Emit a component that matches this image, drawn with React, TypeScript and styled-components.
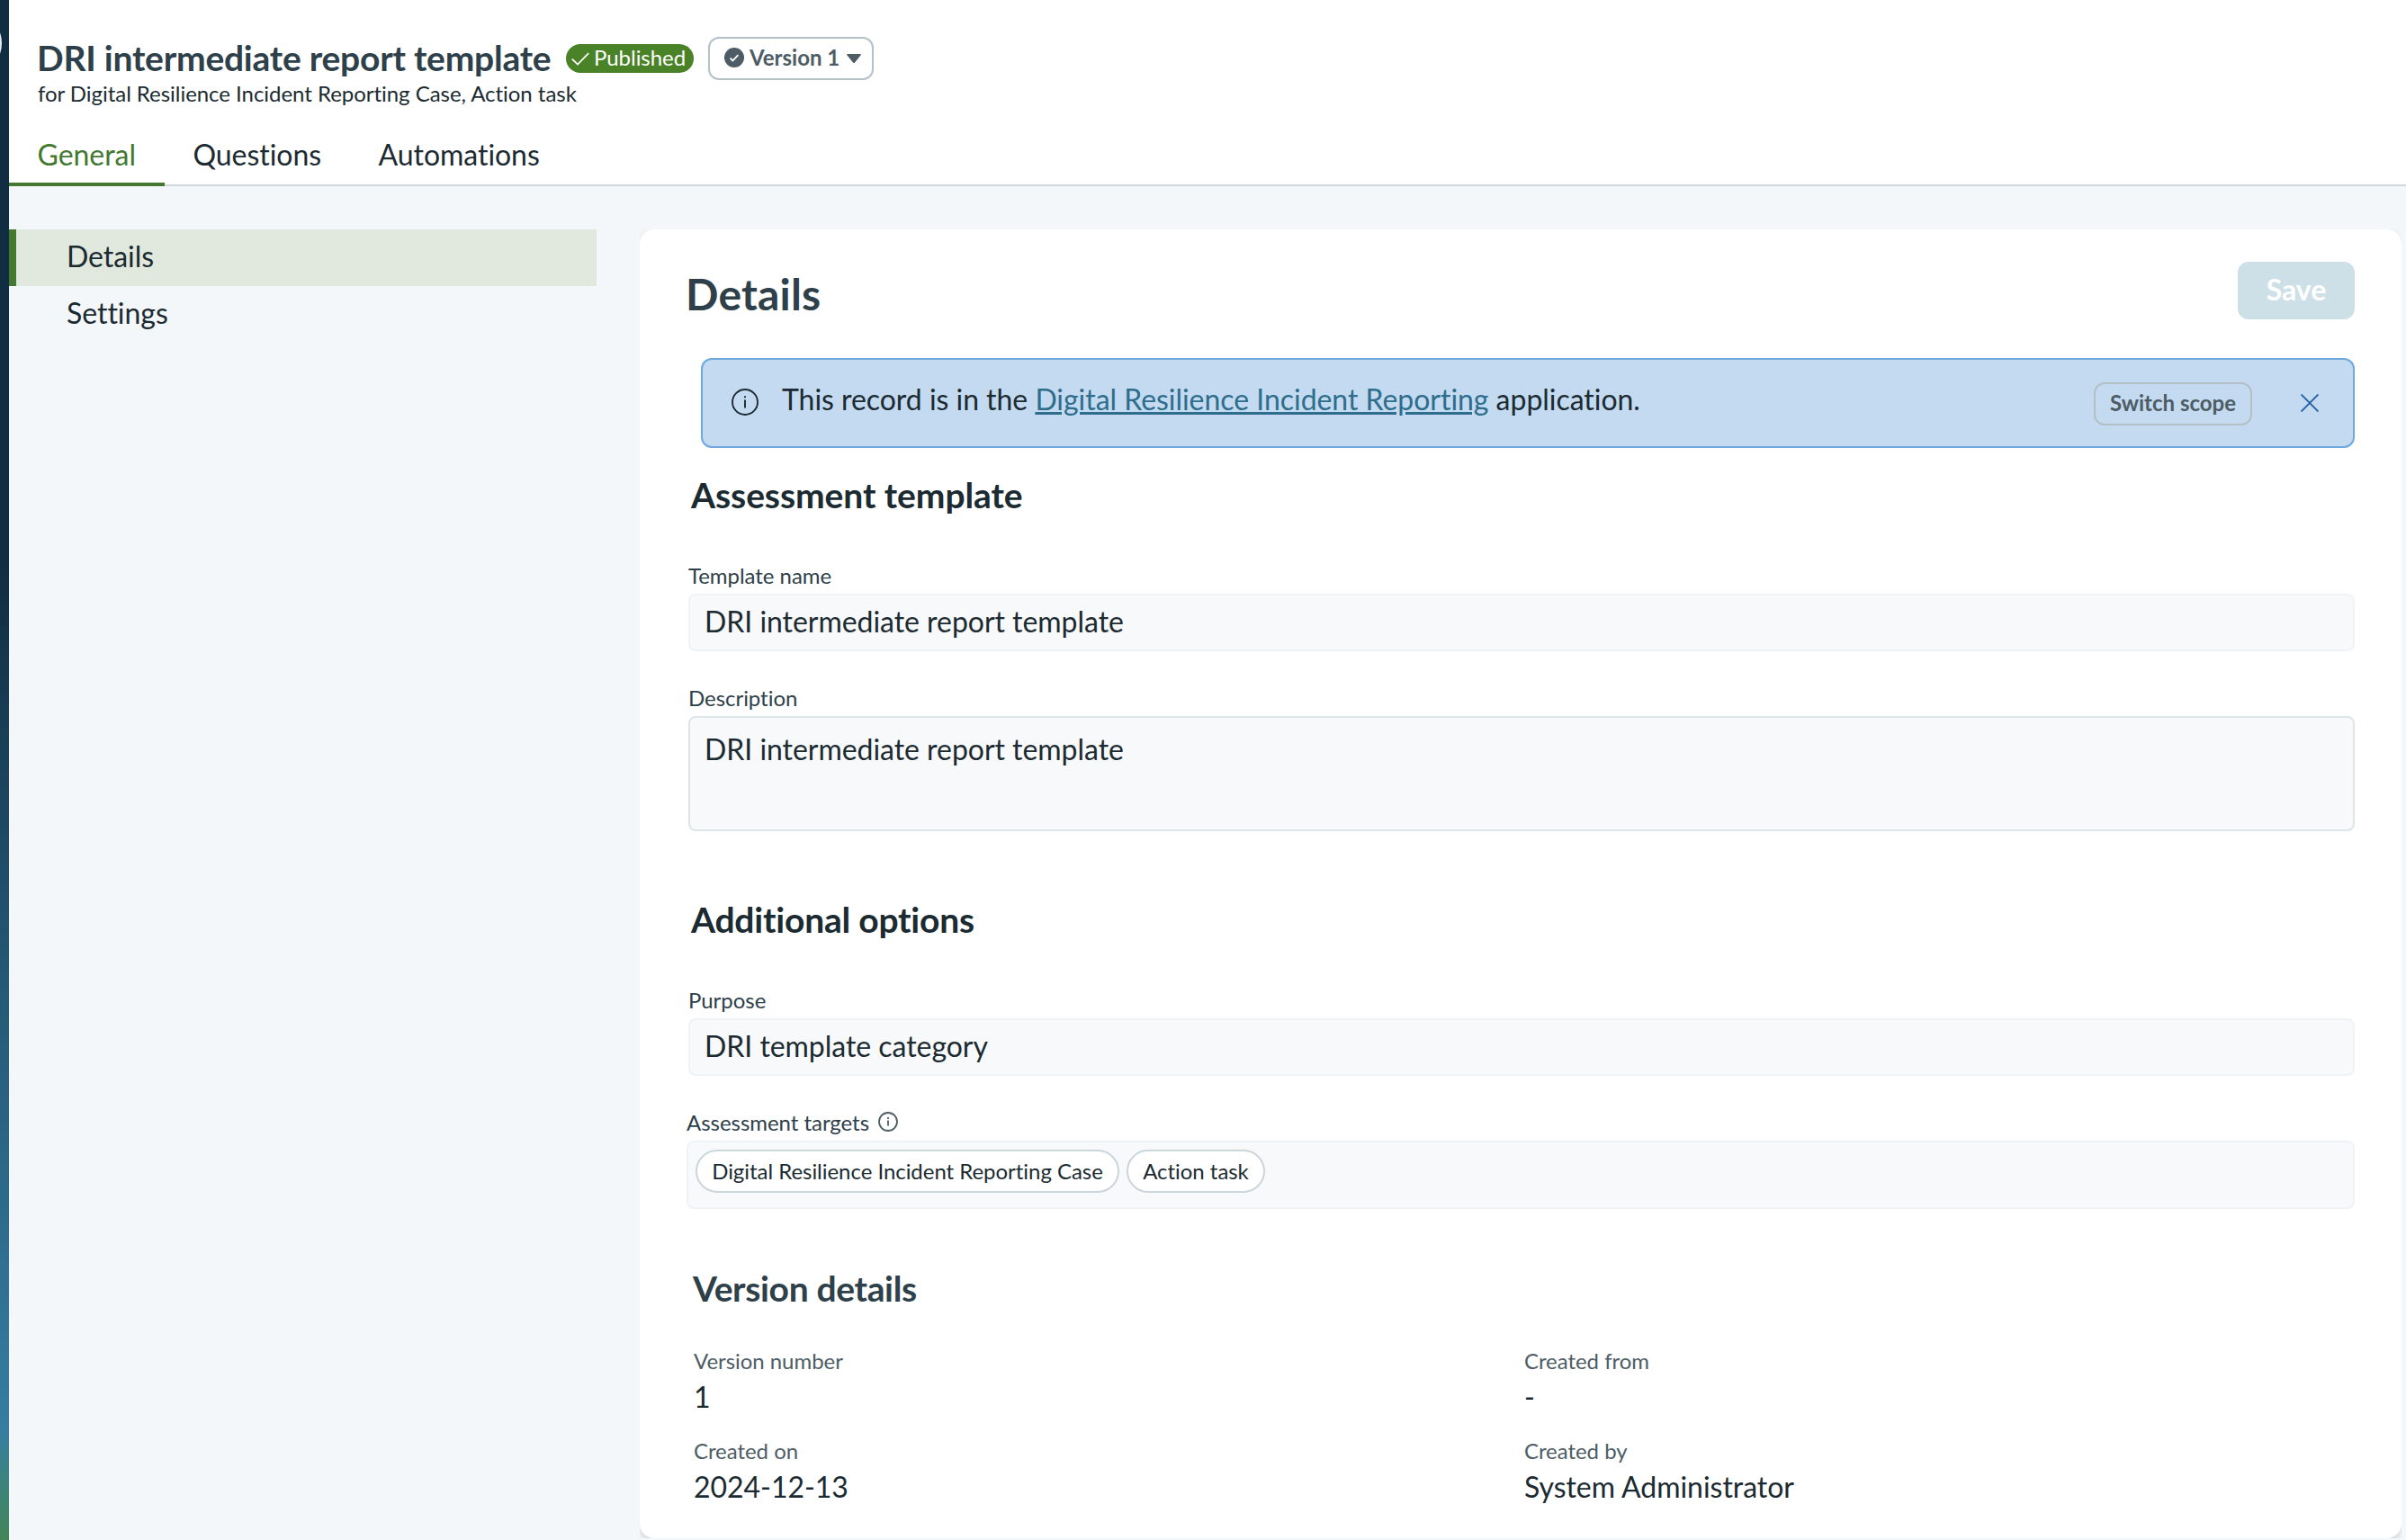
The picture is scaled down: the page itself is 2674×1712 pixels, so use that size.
import React from "react";
import { createGlobalStyle, styled } from "styled-components";

const GlobalStyle = createGlobalStyle`
  * {
    box-sizing: border-box;
  }

  body {
    margin: 0;
    background: #f3f7f9;
    color: #1b2b31;
    font-family: Lato, "Liberation Sans", sans-serif;
    font-size: 32px;
    line-height: 39px;
    letter-spacing: -0.04px;
    font-variant-ligatures: none;
  }

  h1, h2, h3, p {
    margin: 0;
  }

  button {
    font-family: inherit;
    padding: 0;
  }

  svg {
    display: block;
    flex: none;
  }
`;

const Page = styled.div`
  display: flex;
  height: 1712px;
  overflow: hidden;
`;

const Rail = styled.div`
  position: relative;
  flex: none;
  width: 10px;
  overflow: hidden;
  background: linear-gradient(#112d42 0%, #112d42 37%, #245672 62%, #367da0 93%, #3c8380 96%, #438458 100%);

  &::before {
    content: "";
    position: absolute;
    top: 11px;
    left: -72px;
    width: 74px;
    height: 74px;
    border-radius: 50%;
    background: #e9edf0;
  }
`;

const Main = styled.main`
  flex: 1;
  min-width: 0;
`;

const Header = styled.header`
  height: 207px;
  padding-top: 40px;
  background: #fff;
  border-bottom: 2px solid #cfd9dd;

  .title-row {
    display: flex;
    align-items: flex-start;
    height: 49px;
    padding-left: 31px;
  }

  .subtitle {
    padding-left: 32px;
    font-size: 24px;
    line-height: 29px;
  }
`;

const PageTitle = styled.h1`
  width: 588px;
  color: #2e4049;
  font-size: 39px;
  font-weight: 700;
  line-height: 48px;
  letter-spacing: -0.24px;
  white-space: nowrap;
`;

const Badge = styled.span`
  display: flex;
  align-items: flex-start;
  gap: 5px;
  width: 142px;
  height: 32px;
  margin-top: 9px;
  padding-left: 6px;
  border-radius: 16px;
  background: #4a8227;
  color: #fff;
  font-size: 24px;
  line-height: 29px;

  svg {
    margin-top: 9px;
  }
`;

const VersionButton = styled.button`
  display: flex;
  align-items: center;
  width: 184px;
  height: 48px;
  margin: 1px 0 0 16px;
  padding: 0 0 3px 16px;
  border: 2px solid #b3c2c9;
  border-radius: 12px;
  background: #fff;
  color: #4d5c65;
  font-size: 24px;
  font-weight: 700;
  line-height: 29px;
  white-space: nowrap;

  span {
    margin: 0 8px 0 6px;
  }

  svg:last-child {
    margin-top: 3px;
  }
`;

const Tabs = styled.nav`
  display: flex;
  height: 89px;
`;

const Tab = styled.a<{ $active?: boolean }>`
  padding: 34px 32px 0 31.5px;
  color: ${({ $active }) => ($active ? "#437830" : "inherit")};
  border-bottom: ${({ $active }) => ($active ? "4px solid #437830" : "none")};
`;

const Body = styled.div`
  display: flex;
  gap: 48px;
  padding: 48px 5px 2px 0;
`;

const SideNav = styled.nav`
  flex: none;
  width: 653px;
`;

const SideItem = styled.a<{ $active?: boolean }>`
  display: block;
  height: 63px;
  padding: 10px 0 0 56px;
  border-left: 8px solid ${({ $active }) => ($active ? "#437830" : "transparent")};
  background: ${({ $active }) => ($active ? "#e1e9de" : "transparent")};
`;

/* clips the card shadow so that it only shows in the corners */
const CardFrame = styled.div`
  flex: 1;
  height: 1455px;
  overflow: hidden;
`;

const Card = styled.section`
  height: 100%;
  padding: 36px 52px 0;
  border-radius: 16px;
  background: #fff;
  box-shadow: 0 4px 8px rgba(0, 0, 0, 0.14);
`;

const CardHead = styled.div`
  display: flex;
  align-items: flex-end;
  justify-content: space-between;
  height: 64px;

  h2 {
    margin-left: -1px;
    color: #2e4049;
    font-size: 48px;
    line-height: 57px;
    letter-spacing: 0.2px;
  }
`;

const SaveButton = styled.button`
  width: 130px;
  height: 64px;
  padding-bottom: 4px;
  border: 0;
  border-radius: 12px;
  background: #cde0e7;
  color: #fff;
  font-size: 32px;
  font-weight: 700;
  line-height: 39px;
`;

const Alert = styled.div`
  display: flex;
  align-items: center;
  height: 100px;
  margin: 43px 0 0 16px;
  padding: 0 38px 0 32px;
  border: 2px solid #6ea8dc;
  border-radius: 12px;
  background: #c3daf0;

  > svg:first-child {
    margin-bottom: 2px;
  }

  p {
    flex: 1;
    margin: 0 0 9px 26px;
  }

  a {
    color: #2e6d8c;
    text-decoration: underline;
  }
`;

const ScopeButton = styled.button`
  width: 176px;
  height: 48px;
  margin: 2px 54px 0 0;
  padding-bottom: 3px;
  border: 2px solid #b3c0c6;
  border-radius: 12px;
  background: transparent;
  color: #4d5c65;
  font-size: 24px;
  font-weight: 700;
  line-height: 29px;
`;

const SectionTitle = styled.h3<{ $top: number; $indent?: number; $muted?: boolean; $spacing?: number }>`
  margin: ${({ $top }) => $top}px 0 0 ${({ $indent = 5 }) => $indent}px;
  color: ${({ $muted }) => ($muted ? "#2e4049" : "#1b2b31")};
  font-size: 39px;
  line-height: 48px;
  letter-spacing: ${({ $spacing = -0.08 }) => $spacing}px;
`;

const Field = styled.div<{ $first?: boolean; $wide?: boolean }>`
  margin: ${({ $first }) => ($first ? 51 : 37)}px 0 0 ${({ $wide }) => ($wide ? 0 : 2)}px;

  .label {
    display: flex;
    gap: 10px;
    margin-bottom: 6px;
    color: #2e4049;
    font-size: 24px;
    line-height: 29px;
  }
`;

const Input = styled.div<{ $multiline?: boolean }>`
  height: ${({ $multiline }) => ($multiline ? 128 : 64)}px;
  padding: ${({ $multiline }) => ($multiline ? 15 : 9)}px 14px 0 16px;
  border: 2px solid ${({ $multiline }) => ($multiline ? "#dde5e9" : "#f0f3f5")};
  border-radius: 8px;
  background: #f8f9fb;
`;

const ChipBox = styled.div`
  display: flex;
  gap: 8px;
  height: 76px;
  padding: 8px;
  border: 2px solid #f0f3f5;
  border-radius: 8px;
  background: #f8f9fb;
`;

const Chip = styled.span<{ $width: number }>`
  width: ${({ $width }) => $width}px;
  height: 48px;
  padding-top: 7px;
  border: 2px solid #cbd5da;
  border-radius: 24px;
  background: #fff;
  font-size: 24px;
  line-height: 29px;
  text-align: center;
  white-space: nowrap;
`;

const VersionGrid = styled.dl`
  display: grid;
  grid-template-columns: 923px 1fr;
  row-gap: 26px;
  margin: 42px 0 0 8px;

  dt {
    margin-bottom: 6px;
    color: #4d5c65;
    font-size: 24px;
    line-height: 29px;
  }

  dd {
    margin: 0;
  }
`;

const InfoIcon = ({ size, color }: { size: number; color: string }) => (
  <svg width={size} height={size} viewBox="0 0 30 30" fill="none" stroke={color} strokeWidth="1.9">
    <circle cx="15" cy="15" r="14" />
    <path d="M15 12.5v9M15 8.2v2.1" />
  </svg>
);

const SmallInfoIcon = () => (
  <svg width="22" height="29" viewBox="0 0 22 29" fill="none" stroke="#4d5c65" strokeWidth="1.8">
    <circle cx="11" cy="14" r="10" />
    <path d="M11 12.5v6M11 9v2" />
  </svg>
);

const CheckIcon = () => (
  <svg width="20" height="15" viewBox="0 0 20 15" fill="none" stroke="#fff" strokeWidth="1.8">
    <path d="M0.8 7.6L7 13.6L19.2 1.2" />
  </svg>
);

const CheckCircleIcon = () => (
  <svg width="22" height="22" viewBox="0 0 22 22">
    <circle cx="11" cy="11" r="11" fill="#4d5c65" />
    <path d="M6.5 11.6L9.4 14.4L15.4 8.2" fill="none" stroke="#fff" strokeWidth="1.8" />
  </svg>
);

const CaretIcon = () => (
  <svg width="16" height="10" viewBox="0 0 16 10">
    <path d="M1 0H15Q16.4 0.3 15.5 1.5L9 9.4Q8 10.4 7 9.4L0.5 1.5Q-0.4 0.3 1 0Z" fill="#4d5c65" />
  </svg>
);

const CloseIcon = () => (
  <svg width="20" height="20" viewBox="0 0 20 20" stroke="#2460a4" strokeWidth="1.9">
    <path d="M0.5 0.5L19.5 19.5M19.5 0.5L0.5 19.5" />
  </svg>
);

const versionDetails = [
  { label: "Version number", value: "1" },
  { label: "Created from", value: "-" },
  { label: "Created on", value: "2024-12-13" },
  { label: "Created by", value: "System Administrator" },
];

const App = () => {
  return (
    <>
      <GlobalStyle />
      <Page>
        <Rail />
        <Main>
          <Header>
            <div className="title-row">
              <PageTitle>DRI intermediate report template</PageTitle>
              <Badge>
                <CheckIcon />
                Published
              </Badge>
              <VersionButton>
                <CheckCircleIcon />
                <span>Version 1</span>
                <CaretIcon />
              </VersionButton>
            </div>
            <p className="subtitle">for Digital Resilience Incident Reporting Case, Action task</p>
            <Tabs>
              <Tab $active>General</Tab>
              <Tab>Questions</Tab>
              <Tab>Automations</Tab>
            </Tabs>
          </Header>

          <Body>
            <SideNav>
              <SideItem $active>Details</SideItem>
              <SideItem>Settings</SideItem>
            </SideNav>

            <CardFrame>
              <Card>
                <CardHead>
                  <h2>Details</h2>
                  <SaveButton disabled>Save</SaveButton>
                </CardHead>

                <Alert>
                  <InfoIcon size={30} color="#1b2b31" />
                  <p>
                    This record is in the <a>Digital Resilience Incident Reporting</a> application.
                  </p>
                  <ScopeButton>Switch scope</ScopeButton>
                  <CloseIcon />
                </Alert>

                <SectionTitle $top={28}>Assessment template</SectionTitle>
                <Field $first>
                  <div className="label">Template name</div>
                  <Input>DRI intermediate report template</Input>
                </Field>
                <Field>
                  <div className="label">Description</div>
                  <Input $multiline>DRI intermediate report template</Input>
                </Field>

                <SectionTitle $top={74} $spacing={-0.22}>
                  Additional options
                </SectionTitle>
                <Field $first>
                  <div className="label">Purpose</div>
                  <Input>DRI template category</Input>
                </Field>
                <Field $wide>
                  <div className="label">
                    Assessment targets
                    <SmallInfoIcon />
                  </div>
                  <ChipBox>
                    <Chip $width={471}>Digital Resilience Incident Reporting Case</Chip>
                    <Chip $width={154}>Action task</Chip>
                  </ChipBox>
                </Field>

                <SectionTitle $top={64} $indent={7} $spacing={-0.35} $muted>
                  Version details
                </SectionTitle>
                <VersionGrid>
                  {versionDetails.map(({ label, value }) => (
                    <div key={label}>
                      <dt>{label}</dt>
                      <dd>{value}</dd>
                    </div>
                  ))}
                </VersionGrid>
              </Card>
            </CardFrame>
          </Body>
        </Main>
      </Page>
    </>
  );
};

export default App;
